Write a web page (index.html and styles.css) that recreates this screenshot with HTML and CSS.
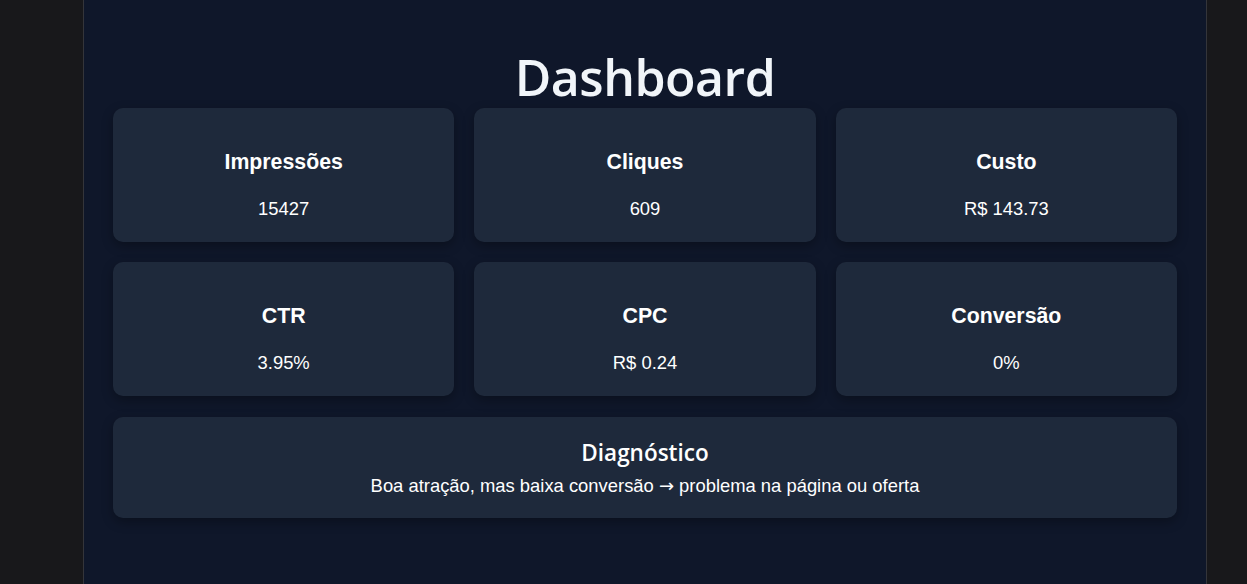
FILE: index.html
```html
<!DOCTYPE html>
<html lang="pt-BR">
<head>
<meta charset="utf-8">
<title>Dashboard</title>
<link rel="stylesheet" href="styles.css">
</head>
<body>
<main class="page">
  <h1 class="title">Dashboard</h1>
  <section class="grid">
    <div class="card"><h3 class="card-label">Impressões</h3><p class="card-value">15427</p></div>
    <div class="card"><h3 class="card-label">Cliques</h3><p class="card-value">609</p></div>
    <div class="card"><h3 class="card-label">Custo</h3><p class="card-value">R$ 143.73</p></div>
    <div class="card"><h3 class="card-label">CTR</h3><p class="card-value">3.95%</p></div>
    <div class="card"><h3 class="card-label">CPC</h3><p class="card-value">R$ 0.24</p></div>
    <div class="card"><h3 class="card-label">Conversão</h3><p class="card-value">0%</p></div>
  </section>
  <section class="diag">
    <h3 class="diag-title">Diagnóstico</h3>
    <p class="diag-text">Boa atração, mas baixa conversão <span class="arrow">→</span> problema na página ou oferta</p>
  </section>
</main>
</body>
</html>
```
FILE: styles.css
```css
html, body {
  margin: 0;
  height: 100%;
  background: #18181b;
}
body {
  font-family: "Open Sans", "Noto Sans", sans-serif;
  color: #f1f5f9;
}
.page {
  box-sizing: border-box;
  margin: 0 40px 0 83px;
  min-height: 100%;
  background: #0f172a;
  border-left: 1px solid #34353a;
  border-right: 1px solid #34353a;
  padding: 46px 29px 40px;
}
.title {
  margin: 0;
  text-align: center;
  font-size: 50px;
  font-weight: 600;
  line-height: 62px;
  letter-spacing: -0.5px;
  color: #f1f5f9;
}
.grid {
  display: grid;
  grid-template-columns: repeat(3, 1fr);
  gap: 20px 20px;
}
.card {
  background: #1e293b;
  border-radius: 10px;
  box-shadow: 0 4px 12px rgba(0, 0, 0, 0.3);
  padding: 42px 20px 23px;
  text-align: center;
  font-family: "Liberation Sans", Arial, sans-serif;
  color: #ffffff;
}
.card-label {
  margin: 0 0 24px;
  font-size: 21.3px;
  line-height: 24px;
  font-weight: 700;
}
.card-value {
  margin: 0;
  font-size: 18.4px;
  line-height: 21px;
}
.diag {
  margin-top: 21px;
  background: #1e293b;
  border-radius: 10px;
  box-shadow: 0 4px 12px rgba(0, 0, 0, 0.3);
  padding: 20px 20px 22px;
  text-align: center;
}
.diag-title {
  margin: 0 0 7px;
  font-size: 22.5px;
  line-height: 31px;
  font-weight: 600;
  color: #ffffff;
}
.diag-text {
  margin: 0;
  font-family: "Liberation Sans", Arial, sans-serif;
  font-size: 18.4px;
  line-height: 21px;
  color: #ffffff;
}
.arrow {
  font-family: "DejaVu Sans", sans-serif;
  font-size: 18px;
  line-height: 1;
}
```
